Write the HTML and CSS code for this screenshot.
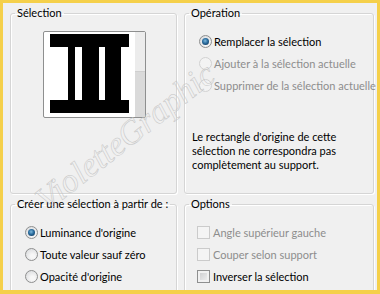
FILE: index.html
```html
<!DOCTYPE html>
<html lang="fr">
<head>
    <meta charset="UTF-8">
    <meta name="viewport" content="width=device-width, initial-scale=1.0">
    <title>Sélection</title>
    <link rel="stylesheet" href="styles.css">
</head>
<body>
    <div class="frame">
        <div class="panels">
            <fieldset class="group group-top">
                <legend>Sélection</legend>
                <div class="preview">
                    <svg class="preview-img" width="79" height="79" viewBox="0 0 79 79">
                        <rect width="79" height="79" fill="#fff"/>
                        <rect x="0" y="0" width="79" height="13" fill="#000"/>
                        <rect x="0" y="66" width="79" height="13" fill="#000"/>
                        <rect x="18" y="13" width="7" height="53" fill="#000"/>
                        <rect x="32" y="13" width="17" height="53" fill="#000"/>
                        <rect x="55" y="13" width="16" height="53" fill="#000"/>
                    </svg>
                    <div class="preview-scroll"><div class="preview-thumb"></div></div>
                </div>
            </fieldset>

            <fieldset class="group group-top">
                <legend>Opération</legend>
                <div class="choices">
                    <label class="choice"><span class="radio checked"></span>Remplacer la sélection</label>
                    <label class="choice disabled"><span class="radio"></span>Ajouter à la sélection actuelle</label>
                    <label class="choice disabled"><span class="radio"></span>Supprimer de la sélection actuelle</label>
                </div>
                <p class="note">Le rectangle d'origine de cette<br>sélection ne correspondra pas<br>complètement au support.</p>
            </fieldset>

            <fieldset class="group group-bottom">
                <legend>Créer une sélection à partir de :</legend>
                <div class="choices">
                    <label class="choice"><span class="radio checked"></span>Luminance d'origine</label>
                    <label class="choice"><span class="radio"></span>Toute valeur sauf zéro</label>
                    <label class="choice"><span class="radio"></span>Opacité d'origine</label>
                </div>
            </fieldset>

            <fieldset class="group group-bottom">
                <legend>Options</legend>
                <div class="choices">
                    <label class="choice boxed disabled"><span class="check"></span>Angle supérieur gauche</label>
                    <label class="choice boxed disabled"><span class="check"></span>Couper selon support</label>
                    <label class="choice boxed"><span class="check"></span>Inverser la sélection</label>
                </div>
            </fieldset>
        </div>

        <div class="watermark">VioletteGraphic</div>
    </div>
</body>
</html>
```

FILE: styles.css
```css
* {
    box-sizing: border-box;
}

body {
    margin: 0;
    font-family: Lato, "Segoe UI", sans-serif;
    font-size: 11px;
    color: #000;
}

.frame {
    position: relative;
    width: 380px;
    height: 294px;
    border-style: solid;
    border-color: #f5d04a;
    border-width: 3px 3px 4px 3px;
    background-color: #f0f0f0;
    padding: 3px 0 0 7px;
    overflow: hidden;
}

.panels {
    display: grid;
    grid-template-columns: 167px 190px;
    grid-template-rows: 188px 110px;
    column-gap: 7px;
    row-gap: 3px;
}

.group {
    margin: 0;
    padding: 0;
    min-width: 0;
    border: 1px solid #d5d5d5;
    border-radius: 3px;
    box-shadow: inset 1px 1px 0 #fff, 1px 1px 0 #fff;
}

.group legend {
    margin-left: 4px;
    padding: 0 2px;
    line-height: 14px;
    white-space: nowrap;
}

/* Aperçu de la sélection */
.preview {
    display: flex;
    width: 103px;
    height: 87px;
    margin: 11px 0 0 32px;
    background-color: #fff;
    border: 1px solid #8e8f8f;
    border-radius: 2px;
}

.preview-img {
    display: block;
    flex: none;
    margin: 2px 6px 0 6px;
}

.preview-scroll {
    display: flex;
    flex-direction: column;
    justify-content: flex-end;
    width: 10px;
    background-color: #ececec;
}

.preview-thumb {
    height: 46px;
    background-color: #dadada;
    border-top: 1px solid #cfcfcf;
}

/* Boutons radio et cases */
.choices {
    margin-top: 10px;
}

.choice {
    display: flex;
    align-items: center;
    gap: 2px;
    height: 22px;
    padding-left: 14px;
    white-space: nowrap;
}

.choice.boxed {
    padding-left: 12px;
    gap: 3px;
}

.choice.disabled {
    color: #8d8d8d;
}

.radio {
    position: relative;
    flex: none;
    width: 13px;
    height: 13px;
    border-radius: 50%;
    border: 1px solid #8e8f8f;
    background: radial-gradient(circle at 60% 65%, #f7f7f7 20%, #d3d5d8 100%);
}

.radio.checked::after {
    content: "";
    position: absolute;
    inset: 2px;
    border-radius: 50%;
    background: radial-gradient(circle at 45% 40%, #7fb9dc 0, #2a6c9e 45%, #0f3557 90%);
}

.disabled .radio {
    border-color: #d2d2d2;
    background: #f3f3f3;
}

.check {
    flex: none;
    width: 13px;
    height: 13px;
    border: 1px solid #8e8f8f;
    background: linear-gradient(135deg, #c8c9cb, #f4f4f4);
    box-shadow: inset 0 0 0 2px #f1f1f1;
}

.disabled .check {
    border-color: #cbcbcb;
    background: #f4f4f4;
    box-shadow: none;
}

.note {
    margin: 34px 0 0 7px;
    line-height: 14px;
    white-space: nowrap;
}

/* Filigrane */
.watermark {
    position: absolute;
    left: 14px;
    top: 115px;
    transform: rotate(-38deg);
    font-family: "Liberation Serif", serif;
    font-style: italic;
    font-size: 34px;
    color: transparent;
    -webkit-text-stroke: 0.5px #c4c4c4;
    pointer-events: none;
}
```
